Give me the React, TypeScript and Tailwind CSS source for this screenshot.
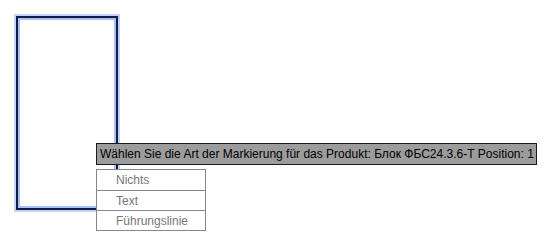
import React from 'react';

const options = ['Nichts', 'Text', 'Führungslinie'];

const App: React.FC = () => {
    return (
        <div className="relative w-[545px] h-[243px] bg-white overflow-hidden" style={{ fontFamily: '"Liberation Sans", Arial, sans-serif' }}>
            {/* selected block outline */}
            <div className="absolute left-[14px] top-[14px] w-[106px] h-[198px] border-2 border-[#c2d2fa]">
                <div className="w-full h-full border-2 border-[#141c48]">
                    <div className="w-full h-full border-2 border-[#a9c1fa] bg-white" />
                </div>
            </div>

            {/* prompt */}
            <div className="absolute left-[96px] top-[143px] w-[441px] h-[22px] bg-[#9c9c9c] border border-[#1a1a1a] flex items-center pl-[3px]">
                <span className="text-[12px] leading-none text-black whitespace-nowrap">
                    Wählen Sie die Art der Markierung für das Produkt: Блок ФБС24.3.6-Т Position: 1
                </span>
            </div>

            {/* option list */}
            <div className="absolute left-[96px] top-[169px] w-[110px] bg-white border border-[#888] flex flex-col">
                {options.map((o, i) => (
                    <div
                        key={o}
                        className={`h-[20px] flex items-center pl-[19px] text-[12px] leading-none text-[#777] ${i > 0 ? 'border-t border-[#888]' : ''}`}
                    >
                        {o}
                    </div>
                ))}
            </div>
        </div>
    );
};

export default App;
